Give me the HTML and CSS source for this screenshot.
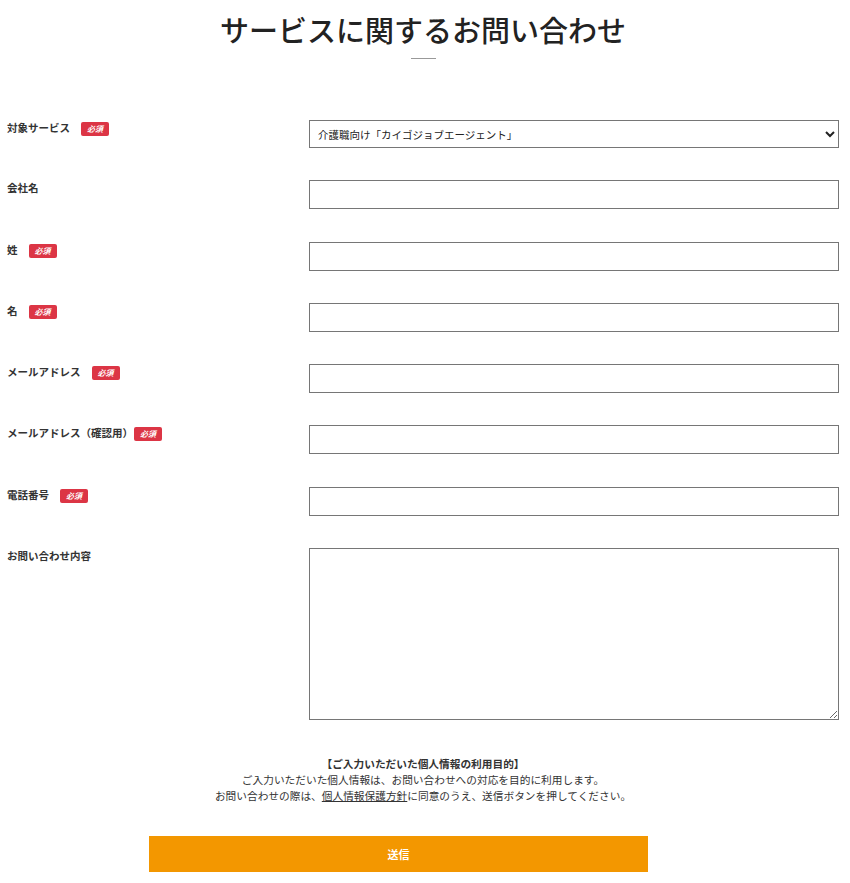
FILE: index.html
```html
<!DOCTYPE html>
<html lang="ja">

<head>
	<meta charset="UTF-8">
	<meta name="viewport" content="width=device-width, initial-scale=1.0">
	<title>サービスに関するお問い合わせ</title>
	<link rel="stylesheet" href="styles.css">
</head>

<body>
	<div class="contact">
		<h1 class="contact-title">サービスに関するお問い合わせ</h1>
		<div class="title-line"></div>

		<form class="contact-form">
			<div class="form-row">
				<label class="form-label">対象サービス<span class="req">必須</span></label>
				<div class="form-field">
					<select class="form-select">
						<option>介護職向け「カイゴジョブエージェント」</option>
					</select>
				</div>
			</div>
			<div class="form-row">
				<label class="form-label">会社名</label>
				<div class="form-field"><input type="text" class="form-input"></div>
			</div>
			<div class="form-row">
				<label class="form-label">姓<span class="req">必須</span></label>
				<div class="form-field"><input type="text" class="form-input"></div>
			</div>
			<div class="form-row">
				<label class="form-label">名<span class="req">必須</span></label>
				<div class="form-field"><input type="text" class="form-input"></div>
			</div>
			<div class="form-row">
				<label class="form-label">メールアドレス<span class="req">必須</span></label>
				<div class="form-field"><input type="email" class="form-input"></div>
			</div>
			<div class="form-row">
				<label class="form-label">メールアドレス（確認用）<span class="req tight">必須</span></label>
				<div class="form-field"><input type="email" class="form-input"></div>
			</div>
			<div class="form-row">
				<label class="form-label">電話番号<span class="req">必須</span></label>
				<div class="form-field"><input type="tel" class="form-input"></div>
			</div>
			<div class="form-row">
				<label class="form-label">お問い合わせ内容</label>
				<div class="form-field"><textarea class="form-textarea"></textarea></div>
			</div>

			<div class="privacy">
				<p class="privacy-head">【ご入力いただいた個人情報の利用目的】</p>
				<p>ご入力いただいた個人情報は、お問い合わせへの対応を目的に利用します。</p>
				<p>お問い合わせの際は、<a href="#">個人情報保護方針</a>に同意のうえ、送信ボタンを押してください。</p>
			</div>

			<div class="submit-wrap">
				<button type="button" class="submit-btn">送信</button>
			</div>
		</form>
	</div>
</body>
</html>
```

FILE: styles.css
```css
body {
	margin: 0;
	padding: 0;
	background-color: #fff;
	color: #333;
	font-family: "Noto Sans CJK JP", "Noto Sans", sans-serif;
}

.contact {
	width: 832px;
	margin: 0 0 0 7px;
}

.contact-title {
	margin: 0;
	padding-top: 9px;
	text-align: center;
	font-size: 29px;
	font-weight: 500;
	letter-spacing: 0;
	line-height: 40px;
	color: #222;
}

.title-line {
	width: 25px;
	height: 1px;
	margin: 9px auto 0;
	background-color: #999;
}

.contact-form {
	margin-top: 61px;
}

.form-row {
	display: grid;
	grid-template-columns: 302px 530px;
	margin-bottom: 32.3px;
}

.form-label {
	display: flex;
	align-items: flex-start;
	padding-top: 0;
	font-size: 10.5px;
	font-weight: bold;
	line-height: 16px;
	color: #333;
}

.req {
	display: inline-block;
	margin-left: 11px;
	margin-top: 2px;
	width: 28px;
	height: 14px;
	border-radius: 2px;
	background-color: #dc3545;
	color: #fff;
	font-size: 8px;
	font-style: italic;
	line-height: 14px;
	text-align: center;
}

.req.tight {
	margin-left: 1px;
}

.form-input,
.form-select,
.form-textarea {
	display: block;
	box-sizing: border-box;
	width: 100%;
	margin: 0;
	border: 1px solid #767676;
	border-radius: 0;
	background-color: #fff;
	font-family: inherit;
	font-size: 10.5px;
	color: #222;
}

.form-input {
	height: 29px;
	padding: 0 7px;
}

.form-select {
	height: 28px;
	padding: 0 4px;
}

.form-textarea {
	height: 172px;
	padding: 7px;
	resize: vertical;
}

.privacy {
	margin-top: 36px;
	text-align: center;
	font-size: 10.7px;
	line-height: 16px;
	color: #333;
}

.privacy p {
	margin: 0;
}

.privacy-head {
	font-weight: bold;
}

.privacy a {
	color: #333;
	text-decoration: underline;
}

.submit-wrap {
	margin-top: 32px;
	padding-left: 142px;
}

.submit-btn {
	display: block;
	width: 499px;
	height: 36px;
	border: none;
	background-color: #f39700;
	color: #fff;
	font-family: inherit;
	font-size: 11px;
	font-weight: bold;
	cursor: pointer;
}
```
